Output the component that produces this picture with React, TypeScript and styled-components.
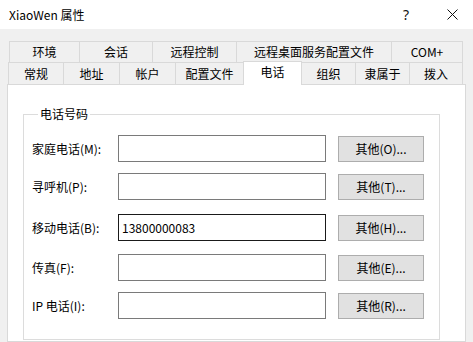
import React from "react";
import styled, { createGlobalStyle } from "styled-components";

const Global = createGlobalStyle`
  html, body { margin: 0; padding: 0; overflow: hidden; background: #ffffff; }
  body { font-family: "Noto Sans CJK SC", "Noto Sans", sans-serif; font-size: 12px; color: #000; }
  * { box-sizing: border-box; }
`;

const Window = styled.div`
  width: 473px;
  height: 342px;
  display: flex;
  flex-direction: column;
  background: #f0f0f0;
  overflow: hidden;
`;

const TitleBar = styled.div`
  height: 29px;
  flex: none;
  background: #ffffff;
  display: flex;
  align-items: center;
  padding-left: 9px;
`;

const Title = styled.div`
  flex: 1;
  font-size: 12px;
  line-height: 16px;
  color: #000;
`;

const CaptionButton = styled.div<{ $w: number }>`
  width: ${(p) => p.$w}px;
  height: 29px;
  display: flex;
  align-items: center;
  justify-content: center;
  font-family: "Noto Sans", sans-serif;
  font-size: 14px;
  color: #111;
`;

const Body = styled.div`
  flex: 1;
  display: flex;
  flex-direction: column;
  padding: 12px 8px 0 7px;
`;

const TabRow = styled.div<{ $indent: number; $h: number }>`
  display: flex;
  align-items: flex-end;
  margin-left: ${(p) => p.$indent}px;
  height: ${(p) => p.$h}px;
  width: ${(p) => 456 - p.$indent}px;
`;

const Tab = styled.div<{ $w: number; $h: number; $active?: boolean; $first?: boolean }>`
  width: ${(p) => p.$w}px;
  height: ${(p) => (p.$active ? p.$h + 2 : p.$h)}px;
  flex: none;
  display: flex;
  align-items: ${(p) => (p.$active ? "flex-start" : "center")};
  padding-top: ${(p) => (p.$active ? 2 : 0)}px;
  justify-content: center;
  background: ${(p) => (p.$active ? "#ffffff" : "#f0f0f0")};
  border-top: 1px solid #d9d9d9;
  border-right: 1px solid #d9d9d9;
  border-left: ${(p) => (p.$first || p.$active ? "1px solid #d9d9d9" : "none")};
  margin-left: ${(p) => (p.$active ? -1 : 0)}px;
  margin-bottom: ${(p) => (p.$active ? -1 : 0)}px;
  position: relative;
  z-index: ${(p) => (p.$active ? 2 : 1)};
  font-size: 12px;
  line-height: 16px;
  white-space: nowrap;
`;

const Panel = styled.div`
  flex: 1;
  width: 459px;
  background: #ffffff;
  border: 1px solid #d9d9d9;
  padding: 21px 0 0 15px;
  position: relative;
  z-index: 1;
`;

const Group = styled.fieldset`
  margin: 0;
  width: 417px;
  height: 234px;
  border: 1px solid #dcdcdc;
  padding: 13px 0 0 8px;
  min-width: 0;
`;

const Legend = styled.legend`
  margin-left: 6px;
  padding: 0 2px;
  font-size: 12px;
  line-height: 16px;
`;

const Row = styled.div<{ $mt: number }>`
  display: flex;
  align-items: center;
  height: 27px;
  margin-top: ${(p) => p.$mt}px;
`;

const Label = styled.div`
  width: 86px;
  flex: none;
  font-size: 12px;
  line-height: 16px;
  white-space: nowrap;
`;

const Input = styled.div<{ $focused?: boolean }>`
  width: 208px;
  height: 27px;
  flex: none;
  border: 1px solid ${(p) => (p.$focused ? "#1a1a1a" : "#7a7a7a")};
  background: #fff;
  display: flex;
  align-items: center;
  padding: 0 3px;
  font-size: 12px;
  line-height: 16px;
`;

const Button = styled.div`
  margin-left: 12px;
  width: 86px;
  height: 26px;
  flex: none;
  background: #e1e1e1;
  border: 1px solid #adadad;
  display: flex;
  align-items: center;
  justify-content: center;
  font-size: 12px;
  line-height: 16px;
`;

const row1 = [
  { t: "环境", w: 71 },
  { t: "会话", w: 73 },
  { t: "远程控制", w: 84 },
  { t: "远程桌面服务配置文件", w: 155 },
  { t: "COM+", w: 71 },
];

const row2 = [
  { t: "常规", w: 56 },
  { t: "地址", w: 56 },
  { t: "帐户", w: 56 },
  { t: "配置文件", w: 68 },
  { t: "电话", w: 59, active: true },
  { t: "组织", w: 54 },
  { t: "隶属于", w: 54 },
  { t: "拨入", w: 53 },
];

const phones = [
  { label: "家庭电话(M):", btn: "其他(O)...", mt: 0 },
  { label: "寻呼机(P):", btn: "其他(T)...", mt: 11 },
  { label: "移动电话(B):", btn: "其他(H)...", mt: 14, value: "13800000083", focused: true },
  { label: "传真(F):", btn: "其他(E)...", mt: 13 },
  { label: "IP 电话(I):", btn: "其他(R)...", mt: 11 },
];

export default function App() {
  return (
    <>
      <Global />
      <Window>
        <TitleBar>
          <Title>XiaoWen 属性</Title>
          <CaptionButton $w={50}>?</CaptionButton>
          <CaptionButton $w={42}>
            <svg width="11" height="11" viewBox="0 0 11 11">
              <path d="M0.5 0.5 L10.5 10.5 M10.5 0.5 L0.5 10.5" stroke="#111" strokeWidth="1" fill="none" />
            </svg>
          </CaptionButton>
        </TitleBar>
        <Body>
          <TabRow $indent={2} $h={21}>
            {row1.map((t, i) => (
              <Tab key={t.t} $w={t.w} $h={21} $first={i === 0}>
                {t.t}
              </Tab>
            ))}
          </TabRow>
          <TabRow $indent={1} $h={22}>
            {row2.map((t, i) => (
              <Tab key={t.t} $w={t.w} $h={22} $first={i === 0} $active={t.active}>
                {t.t}
              </Tab>
            ))}
          </TabRow>
          <Panel>
            <Group>
              <Legend>电话号码</Legend>
              {phones.map((p) => (
                <Row key={p.label} $mt={p.mt}>
                  <Label>{p.label}</Label>
                  <Input $focused={p.focused}>{p.value}</Input>
                  <Button>{p.btn}</Button>
                </Row>
              ))}
            </Group>
          </Panel>
        </Body>
      </Window>
    </>
  );
}
